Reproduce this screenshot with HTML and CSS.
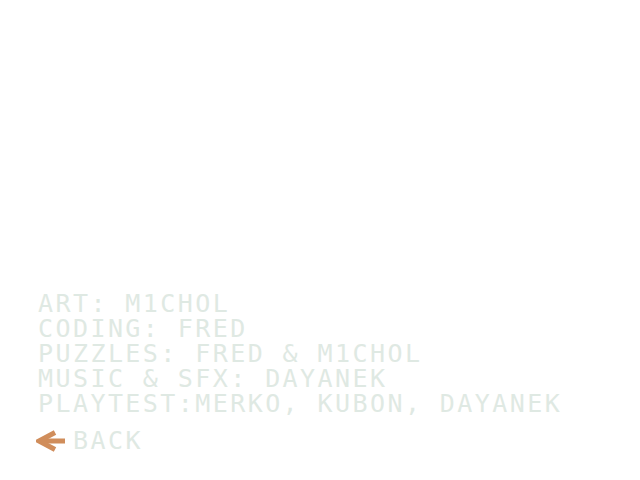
FILE: index.html
```html
<!DOCTYPE html>
<html>
<head>
<meta charset="utf-8">
<link rel="stylesheet" href="styles.css">
</head>
<body>
<div class="screen">
  <div class="credits">
    <div class="line">ART: M1CHOL</div>
    <div class="line">CODING: FRED</div>
    <div class="line">PUZZLES: FRED &amp; M1CHOL</div>
    <div class="line">MUSIC &amp; SFX: DAYANEK</div>
    <div class="line">PLAYTEST:MERKO, KUBON, DAYANEK</div>
  </div>
  <div class="back">
    <svg class="arrow" width="30" height="22" viewBox="0 0 30 22">
      <rect x="4" y="8.5" width="25" height="5" fill="#d08d5b"/>
      <polyline points="19,2.5 3,11 19,19.5" fill="none" stroke="#d08d5b" stroke-width="5" stroke-linejoin="miter"/>
    </svg>
    <span class="label">BACK</span>
  </div>
</div>
</body>
</html>
```
FILE: styles.css
```css
html, body {
  margin: 0;
  padding: 0;
  background: #ffffff;
}
.screen {
  width: 640px;
  height: 480px;
  box-sizing: border-box;
  padding: 291px 0 0 38px;
  display: flex;
  flex-direction: column;
  font-family: "DejaVu Sans Mono", monospace;
  font-size: 25px;
  line-height: 25px;
  color: #dfe9e3;
}
.credits {
  display: flex;
  flex-direction: column;
}
.line {
  letter-spacing: 2.42px;
  white-space: pre;
}
.back {
  margin-top: 12px;
  margin-left: -2px;
  display: flex;
  align-items: center;
  gap: 7px;
}
.arrow {
  display: block;
}
.label {
  letter-spacing: 2.42px;
}
```
